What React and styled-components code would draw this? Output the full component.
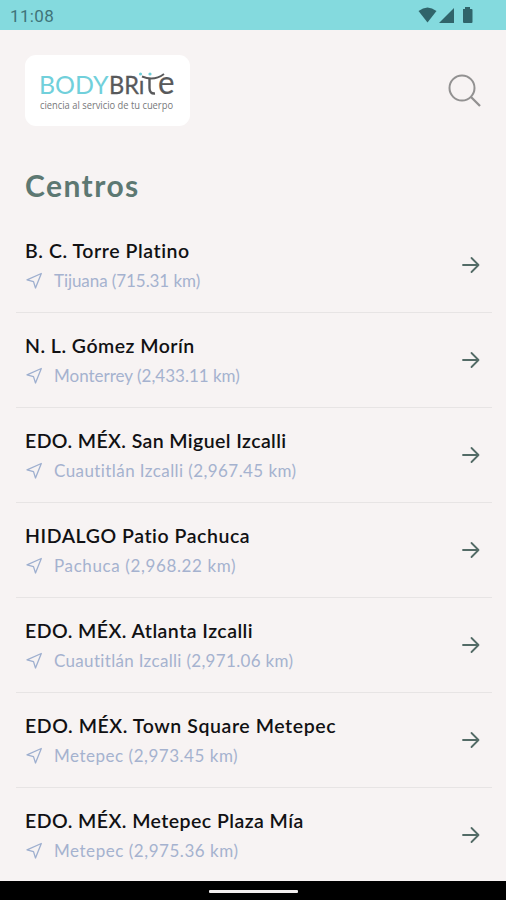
import React from "react";
import styled, { createGlobalStyle } from "styled-components";

const GlobalStyle = createGlobalStyle`
	* { box-sizing: border-box; }
	body {
		margin: 0;
		background: #f7f3f3;
		font-family: Lato, "Open Sans", sans-serif;
	}
`;

const Screen = styled.div`
	display: flex;
	flex-direction: column;
	height: 900px;
	overflow: hidden;
	background: #f7f3f3;
`;

const StatusBar = styled.div`
	display: flex;
	flex: none;
	justify-content: space-between;
	height: 30px;
	padding: 0 32px 0 10px;
	background: #84dade;
	color: #3f7479;
`;

const Clock = styled.span`
	font: 400 17px/32px Roboto, sans-serif;
	letter-spacing: 0.35px;
`;

const Header = styled.header`
	display: flex;
	flex: none;
	justify-content: space-between;
	height: 96px;
	padding: 25px 24px 0 25px;
`;

const LogoCard = styled.div`
	width: 165px;
	height: 71px;
	border-radius: 11px;
	background: #ffffff;
`;

const SearchButton = styled.button`
	width: 34px;
	height: 34px;
	margin-top: 19px;
	padding: 0;
	border: none;
	background: none;
`;

const Title = styled.h1`
	flex: none;
	height: 92px;
	margin: 0;
	padding: 42px 25px 0;
	color: #5d7872;
	font-size: 30px;
	font-weight: 700;
	line-height: 34px;
	letter-spacing: 1.45px;
`;

const List = styled.ul`
	flex: 1;
	min-height: 0;
	margin: 0;
	padding: 0 14px 0 16px;
	overflow: hidden;
	list-style: none;
`;

const Item = styled.li`
	display: flex;
	align-items: center;
	justify-content: space-between;
	height: 95px;
	padding: 0 12px 0 9px;
	border-bottom: 1px solid #e7e4e4;
`;

const Name = styled.div`
	padding-top: 1px;
	color: #111113;
	font-size: 19.5px;
	font-weight: 600;
	line-height: 30px;
	letter-spacing: ${props => props.$spacing}px;
	white-space: nowrap;
`;

const Place = styled.div`
	display: flex;
	align-items: center;
	height: 30px;
	color: #a5b2cf;
	font-size: 17px;
	line-height: 30px;
	letter-spacing: ${props => props.$spacing}px;
	white-space: nowrap;

	svg {
		margin-right: 11px;
	}
`;

const NavBar = styled.div`
	display: flex;
	flex: none;
	justify-content: center;
	height: 19px;
	padding-top: 9px;
	background: #000000;
`;

const Handle = styled.div`
	width: 89px;
	height: 3px;
	border-radius: 1px;
	background: #f2efef;
`;

const centers = [
	{ name: "B. C. Torre Platino", place: "Tijuana (715.31 km)", nameSpacing: 0.57, placeSpacing: -0.07 },
	{ name: "N. L. Gómez Morín", place: "Monterrey (2,433.11 km)", nameSpacing: 0.48, placeSpacing: 0 },
	{ name: "EDO. MÉX. San Miguel Izcalli", place: "Cuautitlán Izcalli (2,967.45 km)", nameSpacing: 0.4, placeSpacing: 0.42 },
	{ name: "HIDALGO Patio Pachuca", place: "Pachuca (2,968.22 km)", nameSpacing: 0.55, placeSpacing: 0.62 },
	{ name: "EDO. MÉX. Atlanta Izcalli", place: "Cuautitlán Izcalli (2,971.06 km)", nameSpacing: 0.46, placeSpacing: 0.32 },
	{ name: "EDO. MÉX. Town Square Metepec", place: "Metepec (2,973.45 km)", nameSpacing: 0.58, placeSpacing: 0.52 },
	{ name: "EDO. MÉX. Metepec Plaza Mía", place: "Metepec (2,975.36 km)", nameSpacing: 0.45, placeSpacing: 0.54 }
];

const StatusIcons = () => (
	<svg width="56" height="30" viewBox="0 0 56 30" fill="#30646a">
		<path d="M0.500 11Q9.500 4 18.500 11L9.500 22.500Z" />
		<path d="M21 23H36V8Z" />
		<path d="M45 9H47V7H52V9H53.500Q54.500 9 54.500 10V22Q54.500 23 53.500 23H46Q45 23 45 22Z" />
	</svg>
);

const Logo = () => (
	<svg width="165" height="71" viewBox="0 0 165 71">
		<g fontFamily="Lato, sans-serif" fontSize="25">
			<text x="14" y="39" fill="#71d0db" textLength="69.500" lengthAdjust="spacingAndGlyphs">BODY</text>
			<text x="84" y="39" fill="#58595b" stroke="#58595b" strokeWidth="0.300" textLength="35.500" lengthAdjust="spacingAndGlyphs">BRı</text>
			<text x="133" y="39" fill="#58595b" stroke="#58595b" strokeWidth="0.200" fontSize="32" textLength="16.500" lengthAdjust="spacingAndGlyphs">e</text>
		</g>
		<path d="M124.500 23V33Q124.500 39 130 38.500" fill="none" stroke="#58595b" strokeWidth="2.400" />
		<path d="M117 21.500Q129 26.500 139 19" fill="none" stroke="#58595b" strokeWidth="1.900" />
		<circle cx="115.500" cy="19" r="1.600" fill="#71d0db" />
		<circle cx="125" cy="19" r="1.600" fill="#71d0db" />
		<text x="15" y="54" fill="#77787a" fontFamily="Open Sans, sans-serif" fontSize="10" textLength="133" lengthAdjust="spacingAndGlyphs">ciencia al servicio de tu cuerpo</text>
	</svg>
);

const SearchIcon = () => (
	<svg width="34" height="34" viewBox="0 0 34 34" fill="none" stroke="#929191" strokeWidth="2">
		<circle cx="14" cy="14" r="12.500" />
		<path d="M23 23L32 32" strokeWidth="2.300" />
	</svg>
);

const LocationIcon = () => (
	<svg width="18" height="18" viewBox="0 0 18 18" fill="none" stroke="#9eafcf" strokeWidth="1.300" strokeLinejoin="round">
		<path d="M16.300 1.500L2 7.800L8.500 9.600L10.500 16Z" />
	</svg>
);

const ArrowIcon = () => (
	<svg width="18" height="18" viewBox="0 0 18 18" fill="none" stroke="#536b66" strokeWidth="1.800" strokeLinecap="round" strokeLinejoin="round">
		<path d="M1 9H16.500M9.500 2L16.500 9L9.500 16" />
	</svg>
);

const Center = ({ center }) => (
	<Item>
		<div>
			<Name $spacing={center.nameSpacing}>{center.name}</Name>
			<Place $spacing={center.placeSpacing}>
				<LocationIcon />
				{center.place}
			</Place>
		</div>
		<ArrowIcon />
	</Item>
);

const App = () => (
	<Screen>
		<GlobalStyle />
		<StatusBar>
			<Clock>11:08</Clock>
			<StatusIcons />
		</StatusBar>
		<Header>
			<LogoCard>
				<Logo />
			</LogoCard>
			<SearchButton aria-label="Buscar">
				<SearchIcon />
			</SearchButton>
		</Header>
		<Title>Centros</Title>
		<List>
			{centers.map(center => (
				<Center key={center.name} center={center} />
			))}
		</List>
		<NavBar>
			<Handle />
		</NavBar>
	</Screen>
);

export default App;
